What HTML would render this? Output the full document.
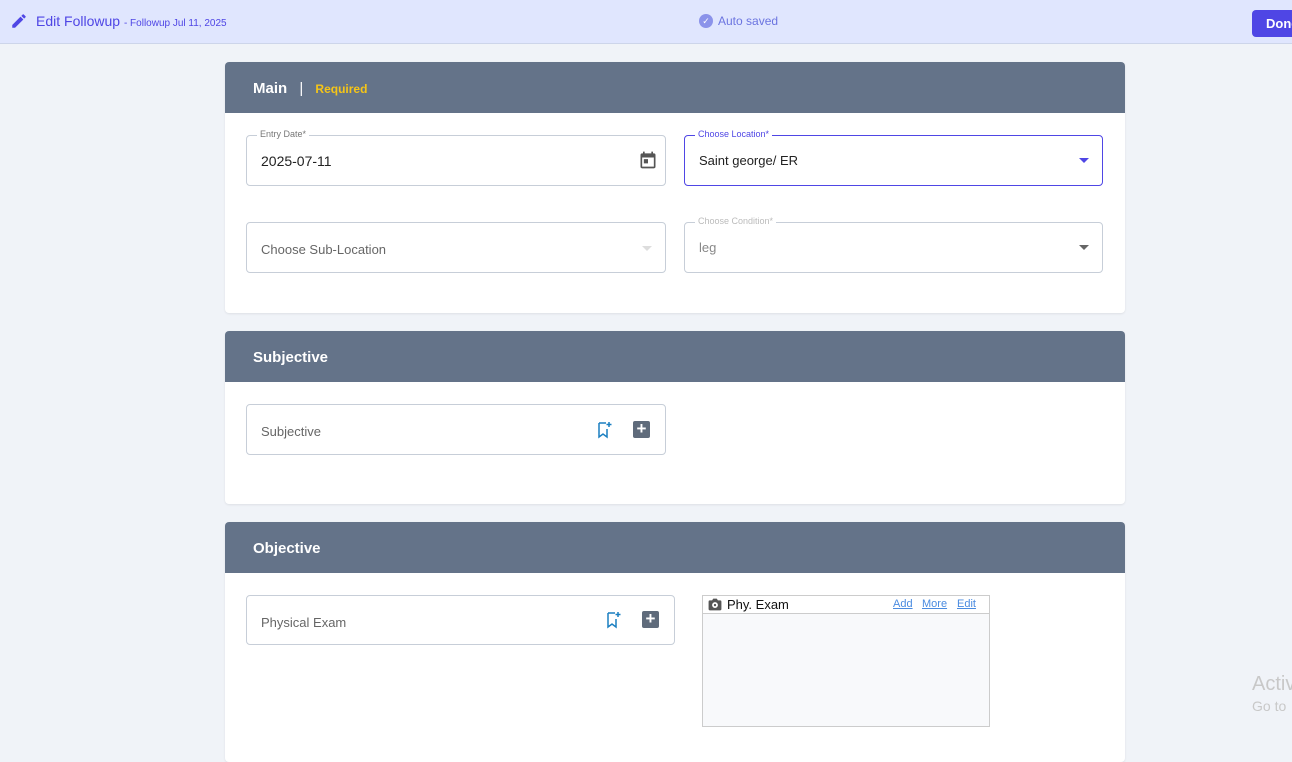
<!DOCTYPE html>
<html><head><style>
*{box-sizing:border-box;margin:0;padding:0}
body{width:1292px;height:749px;overflow:hidden;background:#f0f3f8;font-family:"Liberation Sans",sans-serif;position:relative}
.top{position:absolute;left:0;top:0;width:1292px;height:44px;background:#e0e6fe;border-bottom:1px solid #cdd5ea}
.abs{position:absolute}
.card{position:absolute;left:225px;width:900px;background:#fff;border-radius:4px;overflow:hidden;box-shadow:0 1px 2px rgba(0,0,0,.08)}
.hd{height:51px;background:#647389;color:#fff;font-weight:bold;font-size:15px;padding:18px 0 0 28px}
.f{position:absolute;border:1px solid #c7ced8;border-radius:4px;background:#fff}
.lbl{position:absolute;top:-7px;left:10px;background:#fff;padding:0 3px;font-size:9px;color:#777}
.val{position:absolute;left:14px;top:17px;font-size:14px;color:#222}
.ph{position:absolute;left:14px;top:19px;font-size:13px;color:#666}
.tri{position:absolute;width:0;height:0;border-left:5px solid transparent;border-right:5px solid transparent;border-top:5px solid #666}
.plus{position:absolute;width:17px;height:17px;background:#5f6b7b;border-radius:2px;color:#fff;font-size:17px;line-height:16px;text-align:center;font-weight:bold}
</style></head><body>
<div class="top">
<svg class="abs" style="left:10px;top:12px" width="18" height="18" viewBox="0 0 24 24"><path fill="#4f46e5" d="M3 17.25V21h3.75L17.81 9.94l-3.75-3.75L3 17.25zM20.71 7.04a1 1 0 000-1.41l-2.34-2.34a1 1 0 00-1.41 0l-1.83 1.83 3.75 3.75 1.83-1.83z"/></svg>
<div class="abs" style="left:36px;top:13px;font-size:14px;color:#4f46e5">Edit Followup <span style="font-size:10px">- Followup Jul 11, 2025</span></div>
<div class="abs" style="left:699px;top:14px;width:14px;height:14px;border-radius:50%;background:#8b93ea;color:#fff;font-size:9px;text-align:center;line-height:14px">✓</div>
<div class="abs" style="left:718px;top:14px;font-size:12px;color:#6b74e0">Auto saved</div>
<div class="abs" style="left:1252px;top:10px;width:60px;height:27px;background:#4f46e5;border-radius:4px;color:#fff;font-size:13px;font-weight:bold;padding:6px 14px">Done</div>
</div>

<div class="card" style="top:62px;height:251px">
<div class="hd">Main <span style="font-weight:normal;margin:0 8px">|</span> <span style="color:#f5c518;font-size:12px">Required</span></div>
<div class="f" style="left:21px;top:73px;width:420px;height:51px"><div class="lbl">Entry Date*</div><div class="val">2025-07-11</div>
<svg class="abs" style="left:391px;top:14px" width="20" height="20" viewBox="0 0 24 24"><path fill="#555" d="M19 4h-1V2h-2v2H8V2H6v2H5a2 2 0 00-2 2v14a2 2 0 002 2h14a2 2 0 002-2V6a2 2 0 00-2-2zm0 16H5V9h14v11zM7 11h5v5H7z"/></svg></div>
<div class="f" style="left:459px;top:73px;width:419px;height:51px;border-color:#4f46e5"><div class="lbl" style="color:#4f46e5">Choose Location*</div><div class="val" style="font-size:13px">Saint george/ ER</div><div class="tri" style="left:394px;top:22px;border-top-color:#4f46e5"></div></div>
<div class="f" style="left:21px;top:160px;width:420px;height:51px"><div class="ph">Choose Sub-Location</div><div class="tri" style="left:395px;top:23px;border-top-color:#ddd"></div></div>
<div class="f" style="left:459px;top:160px;width:419px;height:51px"><div class="lbl" style="color:#bbb">Choose Condition*</div><div class="val" style="color:#888;font-size:13px;top:17px">leg</div><div class="tri" style="left:394px;top:22px"></div></div>
</div>

<div class="card" style="top:331px;height:173px">
<div class="hd">Subjective</div>
<div class="f" style="left:21px;top:73px;width:420px;height:51px"><div class="ph">Subjective</div>
<svg class="abs" style="left:350px;top:16px" width="16" height="18" viewBox="0 0 16 18"><path fill="none" stroke="#1a7fc1" stroke-width="1.5" d="M2 2h7M2 2v14l4-3 4 3V8"/><path stroke="#1a7fc1" stroke-width="1.5" d="M12 1v5M9.5 3.5h5"/></svg>
<div class="plus" style="left:386px;top:16px">+</div></div>
</div>

<div class="card" style="top:522px;height:240px">
<div class="hd">Objective</div>
<div class="f" style="left:21px;top:73px;width:429px;height:50px"><div class="ph">Physical Exam</div>
<svg class="abs" style="left:359px;top:15px" width="16" height="18" viewBox="0 0 16 18"><path fill="none" stroke="#1a7fc1" stroke-width="1.5" d="M2 2h7M2 2v14l4-3 4 3V8"/><path stroke="#1a7fc1" stroke-width="1.5" d="M12 1v5M9.5 3.5h5"/></svg>
<div class="plus" style="left:395px;top:15px">+</div></div>
<div class="abs" style="left:477px;top:73px;width:288px;height:132px;border:1px solid #ccc;background:#f8f9fb">
<div style="height:18px;background:#fff;border-bottom:1px solid #ccc;position:relative">
<svg class="abs" style="left:5px;top:2px" width="14" height="13" viewBox="0 0 24 22"><path fill="#555" d="M9 1L7 4H3a2 2 0 00-2 2v13a2 2 0 002 2h18a2 2 0 002-2V6a2 2 0 00-2-2h-4l-2-3zM12 7a5 5 0 110 10 5 5 0 010-10zm0 3a2 2 0 100 4 2 2 0 000-4z"/></svg>
<span class="abs" style="left:24px;top:1px;font-size:13px;color:#111">Phy. Exam</span>
<span class="abs" style="left:190px;top:2px;font-size:11px;color:#4a8be0;text-decoration:underline">Add</span>
<span class="abs" style="left:219px;top:2px;font-size:11px;color:#4a8be0;text-decoration:underline">More</span>
<span class="abs" style="left:254px;top:2px;font-size:11px;color:#4a8be0;text-decoration:underline">Edit</span>
</div></div>
</div>
<div class="abs" style="left:1252px;top:673px;font-size:20px;color:#c8c8c8">Activ</div>
<div class="abs" style="left:1252px;top:698px;font-size:14px;color:#c8c8c8">Go to</div>
</body></html>
